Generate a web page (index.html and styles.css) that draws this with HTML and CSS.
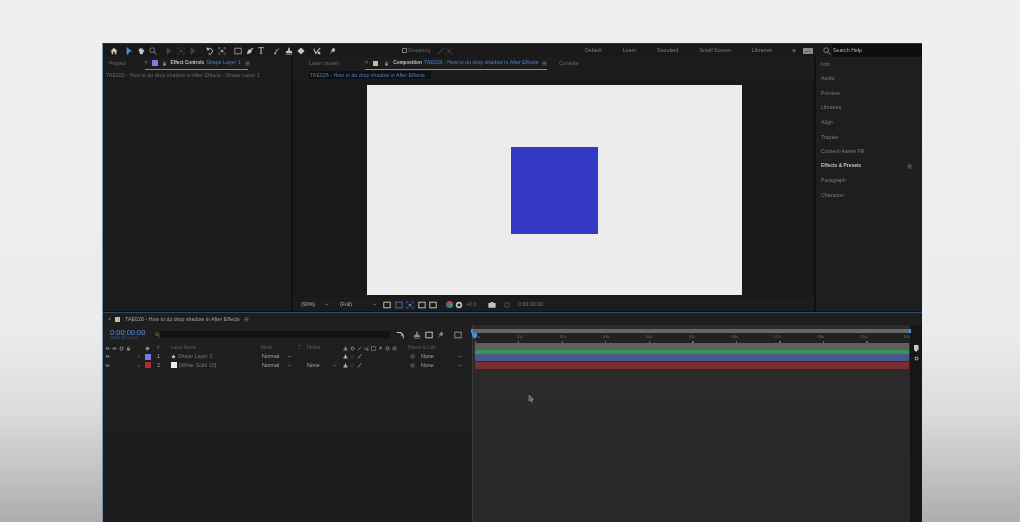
FILE: index.html
```html
<!DOCTYPE html>
<html lang="en">
<head>
<meta charset="utf-8">
<title>After Effects tutorial</title>
<link rel="stylesheet" href="styles.css">
</head>
<body>
<svg class="defs" width="0" height="0">
  <symbol id="home" viewBox="0 0 10 10"><path d="M5 1 9.5 5.2H8V9H6V6.2H4V9H2V5.2H.5z"/></symbol>
  <symbol id="arrow" viewBox="0 0 10 10"><path d="M2 0 9 5.5 5.6 6 3.6 9.6 2 9z"/></symbol>
  <symbol id="hand" viewBox="0 0 10 10"><path d="M2 4 3 2 4 3V1h1v2l1-2 1 1v2l1-1 1 1-2 5H4z"/></symbol>
  <symbol id="zoom" viewBox="0 0 10 10"><circle cx="4" cy="4" r="3" fill="none" stroke="currentColor"/><path d="M6 6 9.5 9.5" stroke="currentColor" stroke-width="1.2"/></symbol>
  <symbol id="rotate" viewBox="0 0 10 10"><path d="M2 2.5A3.6 3.6 0 1 1 3 8.5" fill="none" stroke="currentColor" stroke-width="1.2"/><path d="M1 0v4h3.5z"/></symbol>
  <symbol id="orbit" viewBox="0 0 10 10"><path d="M1 1h2M7 1h2M1 9h2M7 9h2M1 1v2M9 1v2M1 7v2M9 7v2" stroke="currentColor" fill="none"/><circle cx="5" cy="5" r="2"/></symbol>
  <symbol id="rect" viewBox="0 0 10 10"><rect x="1" y="1.5" width="8" height="7" fill="none" stroke="currentColor" stroke-width="1.2"/></symbol>
  <symbol id="pen" viewBox="0 0 10 10"><path d="M1 9 2.5 4 6 2.5 7.5 4 6 7.5zM6.5 2 8 .8 9.2 2 8 3.5z"/></symbol>
  <symbol id="brush" viewBox="0 0 10 10"><path d="M9 .5 4 6l-1-1zM3 5.8 4.2 7 3 9H1z"/></symbol>
  <symbol id="stamp" viewBox="0 0 10 10"><path d="M4 1h2v3l3 2v1.5H1V6l3-2zM1 8.5h8V9.5H1z"/></symbol>
  <symbol id="eraser" viewBox="0 0 10 10"><path d="M5 .5 9.5 5 5 9.5.5 5z"/></symbol>
  <symbol id="roto" viewBox="0 0 10 10"><path d="M1 2 3.5 8 9 1" fill="none" stroke="currentColor" stroke-width="1.3"/><path d="M6 6h3v3H6z"/></symbol>
  <symbol id="pin" viewBox="0 0 10 10"><path d="M5 .5 8 3 6.5 5 7 7 2 4.5 4 3.5zM4 6 1 9.5 3 5.5z"/></symbol>
  <symbol id="eye" viewBox="0 0 10 10"><path d="M.5 5Q5 0 9.500 5 5 10 .5 5z"/><circle cx="5" cy="5" r="1.300" fill="#1d1d1d"/></symbol>
  <symbol id="lock" viewBox="0 0 10 10"><path d="M2 4.500h6V9H2z"/><path d="M3.300 4.500V2.500a1.700 1.700 0 0 1 3.400 0v2" fill="none" stroke="currentColor"/></symbol>
  <symbol id="star" viewBox="0 0 10 10"><path d="M5 .5 6.300 3.800 9.500 4 7 6.300 7.800 9.500 5 7.700 2.200 9.500 3 6.300.5 4 3.700 3.800z"/></symbol>
  <symbol id="spiral" viewBox="0 0 10 10"><circle cx="5" cy="5" r="3.800" fill="none" stroke="currentColor"/><circle cx="5" cy="5" r="1.300"/></symbol>
  <symbol id="camera" viewBox="0 0 10 10"><path d="M.5 2.500h2.500L3.700 1.300h2.600L7 2.500h2.500v6H.5z"/></symbol>
  <symbol id="gear" viewBox="0 0 10 10"><circle cx="5" cy="5" r="3" fill="none" stroke="currentColor" stroke-width="2"/></symbol>
  <symbol id="menu" viewBox="0 0 10 10"><path d="M1 2h8M1 5h8M1 8h8" stroke="currentColor" fill="none" stroke-width="1.200"/></symbol>
  <symbol id="slash" viewBox="0 0 10 10"><path d="M1.500 9 8.500 1" stroke="currentColor" fill="none" stroke-width="1.300"/></symbol>
  <symbol id="nodes" viewBox="0 0 10 10"><path d="M1 2h5l3 3v4M6 5h3" stroke="currentColor" fill="none" stroke-width="1.300"/></symbol>
  <symbol id="chev" viewBox="0 0 10 10"><path d="M2 3.500 5 6.500 8 3.500" stroke="currentColor" fill="none" stroke-width="1.300"/></symbol>
  <symbol id="cursor" viewBox="0 0 10 10"><path d="M1.500.5v8l2-1.800 1.400 3 1.400-.6-1.400-3h2.800z" fill="#555" stroke="#ccc" stroke-width=".7"/></symbol>
</svg>

<main class="app">
  <header class="toolbar">
    <div class="tools">
      <svg class="ic lit ml-home"><use href="#home"/></svg>
      <svg class="ic blue gap-6"><use href="#arrow"/></svg>
      <svg class="ic lit gap-3"><use href="#hand"/></svg>
      <svg class="ic mid gap-3"><use href="#zoom"/></svg>
      <svg class="ic dim gap-7"><use href="#arrow"/></svg>
      <svg class="ic dim gap-3"><use href="#orbit"/></svg>
      <svg class="ic dim gap-3"><use href="#arrow"/></svg>
      <svg class="ic lit gap-8"><use href="#rotate"/></svg>
      <svg class="ic mid gap-3"><use href="#orbit"/></svg>
      <svg class="ic mid gap-7"><use href="#rect"/></svg>
      <svg class="ic lit gap-3"><use href="#pen"/></svg>
      <span class="type-tool">T</span>
      <svg class="ic lit gap-7"><use href="#brush"/></svg>
      <svg class="ic lit gap-3"><use href="#stamp"/></svg>
      <svg class="ic lit gap-3"><use href="#eraser"/></svg>
      <svg class="ic lit gap-7"><use href="#roto"/></svg>
      <svg class="ic lit gap-7"><use href="#pin"/></svg>
    </div>
    <div class="snap">
      <span class="check"></span><span>Snapping</span>
      <svg class="ic dim gap-6"><use href="#slash"/></svg>
      <svg class="ic dim"><use href="#orbit"/></svg>
    </div>
    <nav class="workspaces">
      <span>Default</span><span>Learn</span><span>Standard</span><span>Small Screen</span><span>Libraries</span>
    </nav>
    <div class="help">
      <span class="more">»</span>
      <span class="sync">⋯</span>
      <svg class="ic mid help-icon"><use href="#zoom"/></svg>
      <span class="search">Search Help</span>
    </div>
  </header>

  <section class="upper">
    <div class="panel left">
      <div class="tabs tabs-left">
        <span class="tab-plain">Project</span>
        <div class="tab-active ta-effects">
          <span class="x">×</span><i class="sw purple"></i>
          <svg class="ic-s mid"><use href="#lock"/></svg>
          <b>Effect Controls</b><em>Shape Layer 1</em>
          <svg class="ic-s mid"><use href="#menu"/></svg>
        </div>
      </div>
      <p class="crumb">TAE026 - How to do drop shadow in After Effects - Shape Layer 1</p>
    </div>

    <div class="panel center">
      <div class="tabs tabs-center">
        <span class="tab-plain">Layer (none)</span>
        <div class="tab-active ta-comp">
          <span class="x">×</span><i class="sw tan"></i>
          <svg class="ic-s mid"><use href="#lock"/></svg>
          <b>Composition</b><em>TAE026 - How to do drop shadow in After Effects</em>
          <svg class="ic-s mid"><use href="#menu"/></svg>
        </div>
        <span class="tab-plain console">Console</span>
      </div>
      <div class="crumb-row"><span class="comp-crumb">TAE026 - How to do drop shadow in After Effects</span></div>
      <div class="viewer">
        <div class="comp"><div class="square"></div></div>
      </div>
      <div class="view-foot">
        <span class="zoom-val">(90%)</span>
        <svg class="ic-s mid"><use href="#chev"/></svg>
        <span class="res">(Full)</span>
        <svg class="ic-s mid gap-res"><use href="#chev"/></svg>
        <div class="view-tools">
          <svg class="ic lit"><use href="#rect"/></svg>
          <svg class="ic blue-soft"><use href="#rect"/></svg>
          <svg class="ic blue-soft"><use href="#orbit"/></svg>
          <svg class="ic lit"><use href="#rect"/></svg>
          <svg class="ic lit"><use href="#rect"/></svg>
        </div>
        <i class="rgb"></i>
        <svg class="ic lit"><use href="#gear"/></svg>
        <span class="exposure">+0.0</span>
        <svg class="ic lit cam"><use href="#camera"/></svg>
        <svg class="ic faint"><use href="#gear"/></svg>
        <span class="timecode">0:00:00:00</span>
      </div>
    </div>

    <aside class="panel right">
      <ul class="stack">
        <li>Info</li>
        <li>Audio</li>
        <li>Preview</li>
        <li>Libraries</li>
        <li>Align</li>
        <li>Tracker</li>
        <li>Content-Aware Fill</li>
        <li class="on"><span>Effects &amp; Presets</span><svg class="ic-s mid"><use href="#menu"/></svg></li>
        <li>Paragraph</li>
        <li>Character</li>
      </ul>
    </aside>
  </section>

  <section class="timeline">
    <div class="tl-tab">
      <span class="x">×</span><i class="sw tan"></i>
      <span class="tl-title">TAE026 - How to do drop shadow in After Effects</span>
      <svg class="ic-s mid"><use href="#menu"/></svg>
    </div>
    <div class="tl-body">
      <div class="tl-left">
        <div class="time-row">
          <div class="time">
            <span class="tc">0:00:00:00</span>
            <span class="fps">00000 (25.00 fps)</span>
          </div>
          <svg class="ic-s mid"><use href="#zoom"/></svg>
          <div class="tl-search"></div>
          <div class="tl-tools">
            <svg class="ic lit"><use href="#nodes"/></svg>
            <svg class="ic mid tl-gap"><use href="#stamp"/></svg>
            <svg class="ic lit"><use href="#rect"/></svg>
            <svg class="ic mid"><use href="#pin"/></svg>
            <svg class="ic mid tl-gap"><use href="#rect"/></svg>
          </div>
        </div>
        <div class="cols head">
          <span class="c-icons"><svg class="ic-s mid"><use href="#eye"/></svg><svg class="ic-s mid"><use href="#eye"/></svg><svg class="ic-s mid"><use href="#gear"/></svg><svg class="ic-s mid"><use href="#lock"/></svg></span>
          <span></span>
          <svg class="ic-s mid"><use href="#eraser"/></svg>
          <span class="num">#</span>
          <span>Layer Name</span>
          <span>Mode</span>
          <span>T</span>
          <span>TrkMat</span>
          <span class="switches">
            <svg class="ic-s mid"><use href="#stamp"/></svg><svg class="ic-s mid"><use href="#gear"/></svg><svg class="ic-s mid"><use href="#slash"/></svg><svg class="ic-s mid"><use href="#roto"/></svg><svg class="ic-s mid"><use href="#rect"/></svg><svg class="ic-s mid"><use href="#pin"/></svg><svg class="ic-s mid"><use href="#gear"/></svg><svg class="ic-s mid"><use href="#gear"/></svg>
          </span>
          <span>Parent &amp; Link</span>
        </div>
        <div class="cols row">
          <span class="c-icons"><svg class="ic-s mid"><use href="#eye"/></svg></span>
          <span class="exp">›</span>
          <i class="sw periwinkle"></i>
          <span class="num">1</span>
          <span class="name"><svg class="ic-s lit"><use href="#star"/></svg>Shape Layer 1</span>
          <span class="sel"><span>Normal</span><svg class="ic-s mid"><use href="#chev"/></svg></span>
          <span></span>
          <span></span>
          <span class="switches"><svg class="ic-s lit"><use href="#stamp"/></svg><svg class="ic-s faint"><use href="#gear"/></svg><svg class="ic-s lit"><use href="#slash"/></svg></span>
          <span class="parent"><svg class="ic-s mid"><use href="#spiral"/></svg><span class="pnone">None</span><svg class="ic-s mid"><use href="#chev"/></svg></span>
        </div>
        <div class="cols row">
          <span class="c-icons"><svg class="ic-s mid"><use href="#eye"/></svg></span>
          <span class="exp">›</span>
          <i class="sw red"></i>
          <span class="num">2</span>
          <span class="name"><i class="sw white"></i>[White Solid 10]</span>
          <span class="sel"><span>Normal</span><svg class="ic-s mid"><use href="#chev"/></svg></span>
          <span></span>
          <span class="sel"><span>None</span><svg class="ic-s mid"><use href="#chev"/></svg></span>
          <span class="switches"><svg class="ic-s lit"><use href="#stamp"/></svg><svg class="ic-s faint"><use href="#gear"/></svg><svg class="ic-s lit"><use href="#slash"/></svg></span>
          <span class="parent"><svg class="ic-s mid"><use href="#spiral"/></svg><span class="pnone">None</span><svg class="ic-s mid"><use href="#chev"/></svg></span>
        </div>
      </div>
      <div class="tl-right">
        <div class="nav-bar"></div>
        <div class="ruler">
          <span>0s</span><span>01s</span><span>02s</span><span>03s</span><span>04s</span><span>05s</span><span>06s</span><span>07s</span><span>08s</span><span>09s</span><span>10s</span>
        </div>
        <div class="bar work"></div>
        <div class="bar green"></div>
        <div class="bar indigo"></div>
        <div class="bar crimson"></div>
        <i class="playhead"></i>
        <svg class="pointer"><use href="#cursor"/></svg>
      </div>
      <div class="tl-edge">
        <i class="shield"></i>
        <svg class="ic-s lit"><use href="#gear"/></svg>
      </div>
    </div>
  </section>
</main>
</body>
</html>
```

FILE: styles.css
```css
* { box-sizing: border-box; }
html, body { height: 100%; }
body {
  margin: 0;
  overflow: hidden;
  background: linear-gradient(#efefef 0, #ececec 330px, #dcdcdc 410px, #c4c4c4 470px, #adadad 522px);
  font: 5.300px/1 "Liberation Sans", sans-serif;
  color: #8b8b8b;
  white-space: nowrap;
}
.defs { position: absolute; }
ul, p { margin: 0; padding: 0; list-style: none; }
b, em, i { font-style: normal; }

.app {
  width: 820px;
  height: 479px;
  margin: 43px 0 0 102px;
  display: flex;
  flex-direction: column;
  background: #101010;
  border-left: 1px solid #7e93ad;
  border-top: 1px solid #333;
  filter: blur(.45px);
}

/* icons */
.ic { width: 8px; height: 8px; fill: currentColor; flex: none; }
.ic-s { width: 5px; height: 5px; fill: currentColor; flex: none; }
.lit { color: #c4c4c4; }
.mid { color: #8c8c8c; }
.dim { color: #414141; }
.faint { color: #3a3a3a; }
.blue { color: #3f93e6; }
.blue-soft { color: #4e6fb8; }
.gap-3 { margin-left: 4px; }
.gap-6 { margin-left: 7px; }
.gap-7 { margin-left: 8px; }
.gap-8 { margin-left: 9px; }

/* top bar */
.toolbar { height: 13px; display: flex; align-items: center; background: #191919; flex: none; }
.tools { width: 299px; display: flex; align-items: center; }
.ml-home { margin-left: 7px; }
.type-tool { margin-left: 4px; font: 10px/1 "Liberation Serif", serif; color: #c4c4c4; width: 7px; }
.snap { width: 183px; display: flex; align-items: center; color: #666; }
.check { width: 5px; height: 5px; border: 1px solid #777; margin-right: 1px; }
.workspaces { width: 187px; display: flex; color: #7d7d7d; justify-content: space-between; }
.help { flex: 1; display: flex; align-items: center; padding-left: 20px; gap: 7px; height: 100%; }
.more { color: #999; font-size: 7px; }
.sync { width: 10px; height: 6px; background: #888; color: #222; text-align: center; line-height: 6px; }
.help-icon { margin-left: 3px; }
.search { color: #b5b5b5; margin-left: -6px; background: #0e0e0e; flex: 1; height: 100%; line-height: 13px; padding-left: 1px; }

/* upper panels */
.upper { height: 254px; display: flex; gap: 2px; flex: none; }
.panel { background: #1c1c1c; display: flex; flex-direction: column; }
.left { width: 188px; }
.center { width: 521px; }
.right { flex: 1; background: #1e1e1e; }

.tabs { height: 13px; display: flex; align-items: center; flex: none; }
.tabs-left { padding-left: 6px; }
.tabs-center { padding-left: 16px; }
.tab-plain { color: #6d6d6d; }
.tab-active { display: flex; align-items: center; height: 100%; border-bottom: 1.500px solid #8f8f8f; gap: 4px; color: #c0c0c0; }
.ta-effects { margin-left: 19px; width: 103px; }
.ta-comp { margin-left: 26px; width: 182px; }
.ta-comp .sw { margin-left: 1px; }
.ta-comp .ic-s { margin-left: 2px; }
.ta-comp em + .ic-s { margin-left: 0; }
.console { margin-left: 12px; }
.tab-active b { color: #c4c4c4; font-size: 4.700px; }
.tab-active em { color: #4f7fc2; margin-left: -2px; }
.x { color: #8a8a8a; }
.sw { width: 6px; height: 6px; flex: none; display: block; }
.purple { background: #8a74e0; }
.tan { background: #c9bd8e; width: 5px; height: 5px; }
.periwinkle { background: #7378e8; }
.red { background: #b52c2c; }
.white { background: #eee; }

.crumb { padding: 3px 0 0 3px; height: 10px; color: #666; }
.crumb-row { height: 10px; padding: 1px 0 0 16px; flex: none; }
.comp-crumb { display: inline-block; background: #101012; color: #4d7cc0; padding: 2px 6px 1px 1px; }

.viewer { flex: 1; display: flex; justify-content: center; padding: 5px 0 3px 2px; background: #191919; }
.comp { width: 375px; height: 210px; background: #ececec; display: flex; align-items: center; justify-content: center; }
.square { width: 87px; height: 87px; background: #3339c2; margin-top: 1px; }

.view-foot { height: 13px; flex: none; display: flex; align-items: center; padding-left: 8px; gap: 2px; background: #1c1c1c; }
.zoom-val { color: #aaa; width: 21px; }
.res { color: #aaa; margin-left: 9px; width: 30px; }
.gap-res { margin-right: 4px; }
.view-tools { display: flex; gap: 3.500px; }
.rgb { width: 7px; height: 7px; border-radius: 50%; background: conic-gradient(#d33, #3a3, #36c, #d33); margin-left: 7px; flex: none; }
.exposure { color: #4a72b3; margin-left: 1px; width: 17px; }
.cam { margin-left: 3px; }
.timecode { color: #777; margin-left: 5px; }
.view-foot .faint { margin-left: 5px; }

/* right stack */
.stack { padding: 0 0 0 5px; }
.stack li { height: 14.600px; display: flex; align-items: center; justify-content: space-between; padding-right: 10px; color: #7c7c7c; }
.stack .on { color: #c4c4c4; font-weight: 700; font-size: 4.900px; }

/* timeline */
.timeline { margin-top: 1px; flex: 1; display: flex; flex-direction: column; background: #1e1e1e; border-top: 1px solid #2c4a66; }
.tl-tab { height: 12px; display: flex; align-items: center; gap: 4px; padding: 1px 0 0 5px; flex: none; }
.tl-title { color: #a4a4a4; margin-left: 1px; }
.tl-body { flex: 1; display: flex; }
.tl-left { width: 369px; background: linear-gradient(#1f1f1f, #1c1c1c); }
.time-row { height: 19px; display: flex; align-items: center; padding-left: 7px; }
.time { width: 45px; display: flex; flex-direction: column; gap: 1px; }
.tc { font-size: 7.500px; color: #4d95ea; }
.fps { font-size: 3.500px; color: #3a5d8c; }
.tl-search { width: 230px; height: 7px; background: #121212; margin-right: 6px; }
.tl-tools { display: flex; align-items: center; gap: 4px; }
.tl-gap { margin-left: 5px; }

.cols {
  display: grid;
  grid-template-columns: 35px 7px 10px 16px 90px 37px 8px 37px 65px 64px;
  align-items: center;
}
.head { height: 8.500px; color: #5f5f5f; font-size: 4.600px; }
.row { height: 8.500px; color: #a9a9a9; }
.num { padding-left: 2px; }
.c-icons { display: flex; gap: 2px; padding-left: 2px; }
.exp { color: #888; }
.name { display: flex; align-items: center; gap: 2px; color: #767676; }
.sel { display: flex; align-items: center; gap: 3px; padding-left: 1px; }
.sel span { width: 22px; }
.switches { display: flex; gap: 2px; }
.parent { display: flex; align-items: center; gap: 6px; padding-left: 2px; }
.pnone { width: 30px; }

.tl-right { width: 438px; position: relative; background: linear-gradient(#2b2b2b, #282828); padding-top: 4px; border-left: 1px solid #3a3a3a; }
.nav-bar { height: 4px; background: #666; margin: 0 -1px 0 -2px; border-left: 2px solid #3f93e6; border-right: 2px solid #3f93e6; }
.ruler {
  height: 10px;
  display: flex;
  justify-content: space-between;
  padding: 2px 0 0 3px;
  font-size: 4px;
  color: #6a6a6a;
  background: #222 repeating-linear-gradient(90deg, #6a6a6a 0 1px, transparent 1px 43.500px) 2px 100% / 100% 2px no-repeat;
}
.bar { margin: 0 1px 0 2px; }
.work { height: 7px; background: #5f5f5f; }
.green { height: 3.500px; background: #34964f; }
.indigo { height: 7px; background: #4a568e; margin-top: .5px; }
.crimson { height: 7.500px; background: #772f31; margin-top: .5px; }
.playhead { position: absolute; left: -1px; top: 8px; width: 5px; height: 6px; background: #3f93e6; clip-path: polygon(0 0, 100% 0, 100% 50%, 50% 100%, 0 50%); }
.pointer { position: absolute; left: 55px; top: 69px; width: 7px; height: 9px; }
.tl-edge { flex: 1; background: #161616; display: flex; flex-direction: column; align-items: center; padding: 20px 0 0 0; gap: 4px; }
.shield { width: 5px; height: 7px; background: #c8c8c8; clip-path: polygon(0 0, 100% 0, 100% 60%, 50% 100%, 0 60%); }
```
